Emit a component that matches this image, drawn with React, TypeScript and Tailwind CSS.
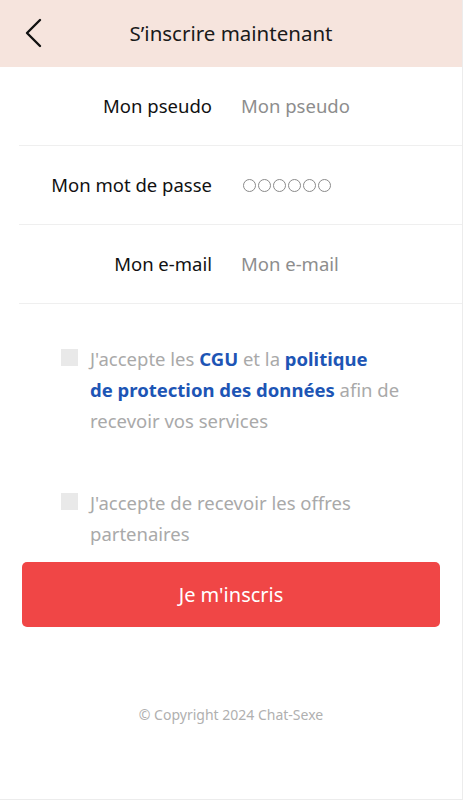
import React from 'react';

const fields = [
  { label: 'Mon pseudo', placeholder: 'Mon pseudo', type: 'text' },
  { label: 'Mon mot de passe', placeholder: '', type: 'password' },
  { label: 'Mon e-mail', placeholder: 'Mon e-mail', type: 'email' },
];

export default function App() {
  return (
    <div
      className="w-[463px] h-[800px] bg-white border-r border-b border-[#ececec] flex flex-col"
      style={{ fontFamily: '"Noto Sans", "Open Sans", sans-serif' }}
    >
      {/* Header */}
      <header className="h-[67px] shrink-0 bg-[#f6e4dd] relative flex items-center justify-center">
        <button className="absolute left-[22px] top-[17px] w-[22px] h-[32px] flex items-center justify-center">
          <svg width="18" height="30" viewBox="0 0 18 30" fill="none">
            <path d="M16 2 L3 15 L16 28" stroke="#111" strokeWidth="2.4" strokeLinecap="round" strokeLinejoin="round" />
          </svg>
        </button>
        <h1 className="text-[20.5px] text-[#1a1a1a]">S’inscrire maintenant</h1>
      </header>

      {/* Form fields */}
      <div className="pl-[19px]">
        {fields.map((f) => (
          <div key={f.label} className="h-[79px] flex items-center border-b border-[#efefef]">
            <label className="w-[193px] text-right text-[18.5px] text-[#111]">{f.label}</label>
            {f.type === 'password' ? (
              <span className="ml-[31px] flex gap-[2px]">
                {[0, 1, 2, 3, 4, 5].map((i) => (
                  <span key={i} className="w-[13px] h-[13px] rounded-full border border-[#8a8a8a]" />
                ))}
              </span>
            ) : (
              <span className="ml-[29px] text-[18.5px] text-[#8d8d8d]">{f.placeholder}</span>
            )}
          </div>
        ))}
      </div>

      {/* Checkboxes */}
      <div className="pl-[61px] mt-[39px] flex items-start gap-[12px]">
        <span className="w-[17px] h-[17px] mt-[6px] shrink-0 bg-[#e9e9e9]" />
        <p className="w-[310px] text-[18.5px] leading-[31px] text-[#a9a9a9]">
          J'accepte les <span className="font-bold text-[#1d55b5]">CGU</span> et la{' '}
          <span className="font-bold text-[#1d55b5]">politique</span>
          <br />
          <span className="font-bold text-[#1d55b5]">de protection des données</span> afin de recevoir vos services
        </p>
      </div>

      <div className="pl-[61px] mt-[51px] flex items-start gap-[12px]">
        <span className="w-[17px] h-[17px] mt-[6px] shrink-0 bg-[#e9e9e9]" />
        <p className="w-[305px] text-[18.5px] leading-[31px] text-[#a9a9a9]">
          J'accepte de recevoir les offres partenaires
        </p>
      </div>

      {/* Submit */}
      <div className="px-[22px] mt-[13px]">
        <button className="w-full h-[65px] rounded-[5px] bg-[#f04646] text-white text-[20px]">
          Je m'inscris
        </button>
      </div>

      <p className="mt-[77px] text-center text-[14px] text-[#b0b0b0]">© Copyright 2024 Chat-Sexe</p>
    </div>
  );
}
